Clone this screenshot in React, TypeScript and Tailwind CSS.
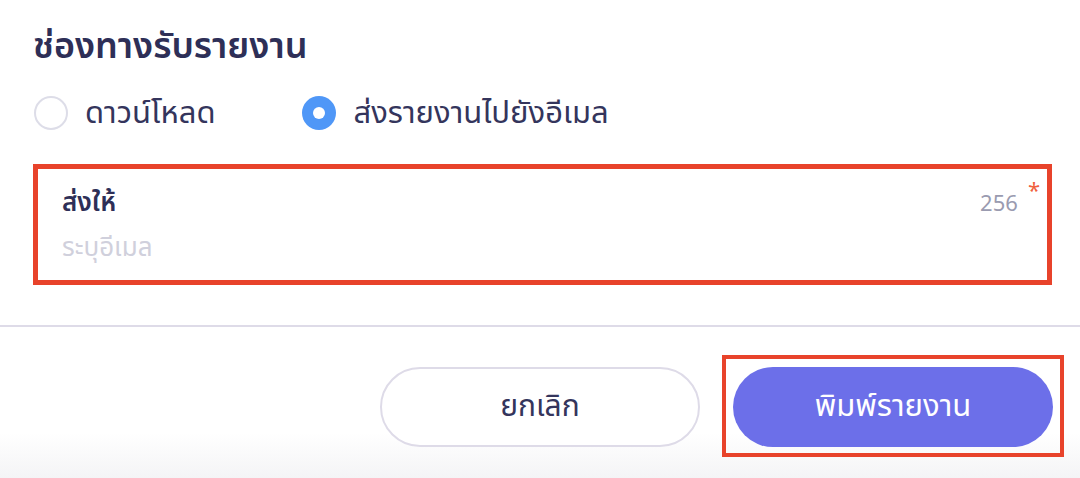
const font = "font-['Noto_Sans_Thai','Noto_Sans','Liberation_Sans',sans-serif]";

function Radio({ label, checked }: { label: string; checked?: boolean }) {
  return (
    <label className="flex items-center gap-[17px]">
      {checked ? (
        <span className="flex h-[34px] w-[34px] items-center justify-center rounded-full bg-[#4f97f7]">
          <span className="h-[12px] w-[12px] rounded-full bg-white" />
        </span>
      ) : (
        <span className="h-[34px] w-[34px] rounded-full border-2 border-[#dddde8] bg-white" />
      )}
      <span className="text-[31px] leading-none text-[#34355c]">{label}</span>
    </label>
  );
}

export default function App() {
  return (
    <div className={`${font} flex h-[478px] w-[1080px] flex-col bg-white`}>
      <div className="px-[33px] pt-[25px]">
        <h2 className="text-[36px] font-semibold leading-[44px] text-[#2e2f57]">ช่องทางรับรายงาน</h2>

        <div className="mt-[27px] flex items-center gap-[87px] pl-px">
          <Radio label="ดาวน์โหลด" />
          <Radio label="ส่งรายงานไปยังอีเมล" checked />
        </div>

        <div className="mt-[34px] h-[121px] w-[1019px] border-[5px] border-[#e8432b] px-[24px] pt-[16px]">
          <div className="flex items-start justify-between">
            <span className="text-[26px] font-semibold leading-[36px] text-[#2e2f57]">ส่งให้</span>
            <div className="-mr-[17px] flex items-start">
              <span className="mt-[3px] text-[22px] leading-[34px] text-[#9a9bb0]">256</span>
              <span className="-mt-[8px] ml-[10px] text-[22px] leading-[30px] text-[#f0603e]">*</span>
            </div>
          </div>
          <input
            className="mt-[9px] w-full bg-transparent text-[26px] leading-[34px] text-[#2e2f57] outline-none placeholder:text-[#d0d0dc]"
            placeholder="ระบุอีเมล"
          />
        </div>
      </div>

      <div className="mt-[40px] border-t-2 border-[#dedbe8]" />

      <div className="flex flex-1 items-start justify-end gap-[22px] bg-gradient-to-b from-white from-[70%] to-[#f4f4f6] pr-[16px] pt-[28px]">
        <button className="mt-[12px] h-[80px] w-[320px] rounded-full border-2 border-[#dedbe8] bg-white text-[30px] text-[#34355c]">
          ยกเลิก
        </button>
        <div className="border-4 border-[#e8432b] px-[7px] pt-[8px] pb-[6px]">
          <button className="h-[80px] w-[320px] rounded-full bg-[#6c6fe9] text-[31px] text-white">
            พิมพ์รายงาน
          </button>
        </div>
      </div>
    </div>
  );
}
